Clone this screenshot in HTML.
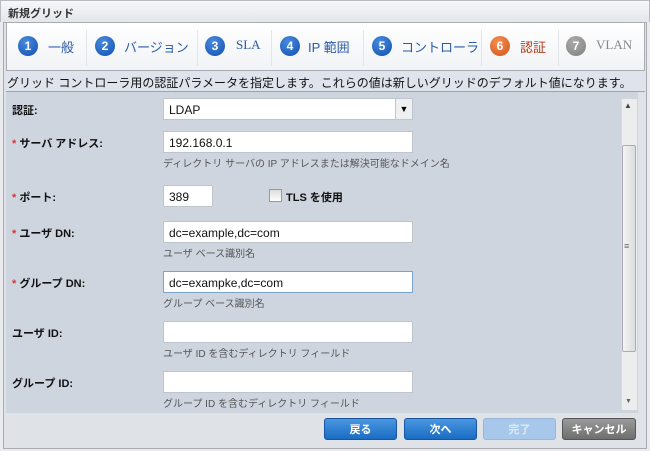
<!DOCTYPE html>
<html><head><meta charset="utf-8"><style>
*{margin:0;padding:0;box-sizing:border-box}
body{width:650px;height:451px;background:#e9ebee;font-family:"Liberation Sans","Noto Sans CJK JP",sans-serif;position:relative;overflow:hidden;font-size:12px}
.a{position:absolute}
.title{left:0;top:0;width:650px;height:22px;background:linear-gradient(#f6f7f9,#e3e6ea);border:1px solid #b8bcc2;border-bottom:none}
.title span{position:absolute;left:7px;top:4px;font-weight:bold;font-size:11px;color:#333}
.frame{left:3px;top:22px;width:644px;height:427px;border:1px solid #a8acb2;background:#dfe3e8}
.tabs{left:6px;top:22px;width:639px;height:49px;background:linear-gradient(#fff,#f1f3f6);border:1px solid #a8acb2}
.c{width:20px;height:20px;border-radius:50%;color:#fff;font-weight:bold;font-size:12px;text-align:center;line-height:20px;top:36px;background:radial-gradient(circle at 40% 30%,#4a8be0,#0f4fae)}
.tl{top:37px;font-size:13px;color:#2a5aa8}
.sep{top:30px;width:1px;height:36px;background:#e2e5e9}
.desc{left:6px;top:71px;width:639px;height:21px;background:#dfe4ec;border-bottom:1px solid #9da3aa;font-size:12px;padding:3px 0 0 1px;color:#111;white-space:nowrap}
.content{left:6px;top:92px;width:632px;height:321px;background:#ced5df}
.lb{left:12px;font-weight:bold;font-size:11px;color:#111}
.lb b{color:#d33}
.in{left:163px;width:250px;height:22px;background:#fff;border:1px solid #bfc5cc;font-size:12px;padding:4px 5px;color:#111}
.hp{left:163px;font-size:10px;color:#555}
.sb{left:621px;top:99px;width:16px;height:311px;background:#eceded;border-left:1px solid #d8dadc}
.btn{top:418px;height:22px;border-radius:3px;color:#fff;font-weight:bold;font-size:11px;text-align:center;line-height:22px;border:1px solid #1a56a0;background:linear-gradient(#4a97e0,#1a6cc4)}
</style></head><body>
<div class="a title"><span>新規グリッド</span></div>
<div class="a frame"></div>
<div class="a tabs"></div>
<div class="a c" style="left:18px">1</div><div class="a tl" style="left:48px">一般</div>
<div class="a sep" style="left:86px"></div>
<div class="a c" style="left:95px">2</div><div class="a tl" style="left:124px">バージョン</div>
<div class="a sep" style="left:197px"></div>
<div class="a c" style="left:205px">3</div><div class="a tl" style="left:236px;font-family:'Liberation Serif',serif">SLA</div>
<div class="a sep" style="left:271px"></div>
<div class="a c" style="left:280px">4</div><div class="a tl" style="left:308px">IP 範囲</div>
<div class="a sep" style="left:363px"></div>
<div class="a c" style="left:372px">5</div><div class="a tl" style="left:401px">コントローラ</div>
<div class="a sep" style="left:481px"></div>
<div class="a c" style="left:490px;background:radial-gradient(circle at 40% 30%,#f39050,#d4521a)">6</div><div class="a tl" style="left:520px;color:#b83a1a">認証</div>
<div class="a sep" style="left:558px"></div>
<div class="a c" style="left:566px;background:radial-gradient(circle at 40% 30%,#aaa,#808080)">7</div><div class="a tl" style="left:596px;color:#888;font-family:'Liberation Serif',serif">VLAN</div>
<div class="a desc">グリッド コントローラ用の認証パラメータを指定します。これらの値は新しいグリッドのデフォルト値になります。</div>
<div class="a content"></div>
<div class="a lb" style="top:102px">認証:</div>
<div class="a in" style="top:98px">LDAP</div>
<div class="a" style="left:395px;top:98px;width:18px;height:22px;border:1px solid #bfc5cc;background:#eef0f2;font-size:9px;text-align:center;line-height:20px">▼</div>
<div class="a lb" style="top:135px"><b>*</b> サーバ アドレス:</div>
<div class="a in" style="top:131px">192.168.0.1</div>
<div class="a hp" style="top:155px">ディレクトリ サーバの IP アドレスまたは解決可能なドメイン名</div>
<div class="a lb" style="top:189px"><b>*</b> ポート:</div>
<div class="a in" style="top:185px;width:50px">389</div>
<div class="a" style="left:269px;top:189px;width:13px;height:13px;border:1px solid #999;background:linear-gradient(#ddd,#fff)"></div>
<div class="a lb" style="left:286px;top:189px">TLS を使用</div>
<div class="a lb" style="top:225px"><b>*</b> ユーザ DN:</div>
<div class="a in" style="top:221px">dc=example,dc=com</div>
<div class="a hp" style="top:245px">ユーザ ベース識別名</div>
<div class="a lb" style="top:275px"><b>*</b> グループ DN:</div>
<div class="a in" style="top:271px;border-color:#7aa3d0">dc=exampke,dc=com</div>
<div class="a hp" style="top:295px">グループ ベース識別名</div>
<div class="a lb" style="top:325px">ユーザ ID:</div>
<div class="a in" style="top:321px"></div>
<div class="a hp" style="top:345px">ユーザ ID を含むディレクトリ フィールド</div>
<div class="a lb" style="top:375px">グループ ID:</div>
<div class="a in" style="top:371px"></div>
<div class="a hp" style="top:395px">グループ ID を含むディレクトリ フィールド</div>
<div class="a sb"></div>
<div class="a" style="left:624px;top:101px;font-size:8px;color:#444">▲</div>
<div class="a" style="left:622px;top:145px;width:14px;height:207px;border:1px solid #aab;border-radius:2px;background:linear-gradient(90deg,#f4f4f4,#dcdcdc)"></div>
<div class="a" style="left:624px;top:241px;font-size:9px;color:#666">≡</div>
<div class="a" style="left:625px;top:398px;font-size:7px;color:#666">▼</div>
<div class="a btn" style="left:324px;width:73px">戻る</div>
<div class="a btn" style="left:404px;width:73px">次へ</div>
<div class="a btn" style="left:483px;width:73px;background:#a7c8ea;border-color:#97b6d8;color:#dbe8f5">完了</div>
<div class="a btn" style="left:562px;width:74px;background:linear-gradient(#9a9a9a,#6e6e6e);border-color:#555">キャンセル</div>
</body></html>
